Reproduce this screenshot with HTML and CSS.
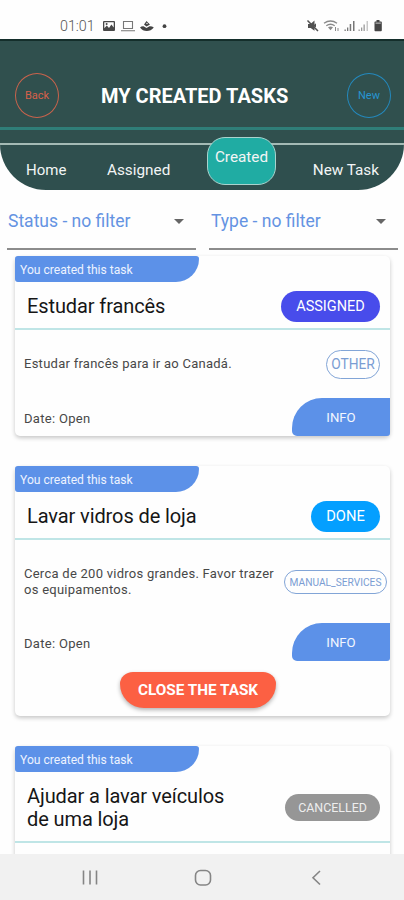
FILE: index.html
```
<!DOCTYPE html>
<html lang="pt">
<head>
<meta charset="utf-8">
<title>My Created Tasks</title>
<link rel="stylesheet" href="styles.css">
</head>
<body>
<div class="screen">
  <div class="status">
    <span class="clock">01:01</span>
    <svg class="status-left" width="66" height="14" viewBox="0 0 66 14">
      <path fill="#484848" fill-rule="evenodd" d="M2 2h10q1 0 1 1v8q0 1-1 1H2q-1 0-1-1V3q0-1 1-1zM2.300 3.300v6l2.500-2.800 2.200 2.500 2.400-3.500 2.300 3V3.300z"/>
      <circle cx="4.600" cy="5" r="1" fill="#484848"/>
      <path fill="none" stroke="#777" stroke-width="1.100" d="M21.500 2.500h9v7h-9zM19 11.700h14"/>
      <path fill="#444" d="M38 8.500q1.500-1.500 3.500-1.300L44.500 9l3-1.800q2.500-.200 4.300 1.300-2.800 3.500-7 3.500t-6.800-3.500zM42 5.500l2.500-3.500 3.500 3.500-3.500 2z"/>
      <circle cx="45" cy="4.500" r=".7" fill="#fff"/>
      <circle cx="62.500" cy="7.200" r="1.900" fill="#444"/>
    </svg>
    <svg class="status-right" width="78" height="14" viewBox="0 0 78 14">
      <path fill="#505050" d="M2 5h2.500l4-3.500v4.200l1.500-1.400v4L8.500 7.500v4.300L4.700 9H2z"/>
      <path stroke="#505050" stroke-width="1.500" d="M1.500 1.500l10.500 10.500"/>
      <g fill="none" stroke="#8a8a8a" stroke-width="1.400"><path d="M18 4.300q6.500-4.600 13 0M20.300 6.800q4.200-3 8.400 0"/></g>
      <path fill="#8a8a8a" d="M22 8.300q2.500-1.600 5 0l-2.500 3zM29 8h1v4h-1zM31.500 9h1v3h-1z"/>
      <path fill="#777" d="M38.500 10.500h1.300V12h-1.300zM41 8.500h1.300V12H41zM43.700 5h1.500v7h-1.500zM47 2h1.500v10H47z"/>
      <path fill="#999" d="M52.500 10.500h1.300V12h-1.300zM55 8.500h1.300V12H55zM57.500 5.500h1.300V12h-1.300z"/>
      <path fill="#c8c8c8" d="M60.500 2H62v10h-1.500z"/>
      <path fill="#454545" d="M70.500 1h3v1.500H75q.8 0 .8.800v8q0 .9-.8.900h-5.700q-.8 0-.8-.9v-8q0-.8.800-.8h1.200z"/>
      <path fill="#aaa" d="M69.500 3.500h5.300v1.300h-5.300z"/>
    </svg>
  </div>

  <header class="header">
    <button class="circle back">Back</button>
    <h1>MY CREATED TASKS</h1>
    <button class="circle new">New</button>
  </header>

  <div class="tabs-wrap">
    <nav class="tabs">
      <a class="tab home">Home</a>
      <a class="tab assigned">Assigned</a>
      <a class="tab created">Created</a>
      <a class="tab newtask">New Task</a>
    </nav>
  </div>

  <div class="filters">
    <div class="filter"><span>Status - no filter</span><i class="arrow"></i></div>
    <div class="filter type"><span>Type - no filter</span><i class="arrow"></i></div>
  </div>

  <main class="list">
    <article class="card">
      <div class="ribbon">You created this task</div>
      <div class="head"><h2>Estudar francês</h2><span class="pill assigned-pill">ASSIGNED</span></div>
      <div class="body"><p>Estudar francês para ir ao Canadá.</p><span class="kind">OTHER</span></div>
      <div class="foot"><span>Date: Open</span><button class="info">INFO</button></div>
    </article>
    <article class="card">
      <div class="ribbon">You created this task</div>
      <div class="head"><h2>Lavar vidros de loja</h2><span class="pill done-pill">DONE</span></div>
      <div class="body two-lines"><p>Cerca de 200 vidros grandes. Favor trazer<br>os equipamentos.</p><span class="kind small">MANUAL_SERVICES</span></div>
      <div class="foot"><span>Date: Open</span><button class="info">INFO</button></div>
      <div class="action"><button class="close">CLOSE THE TASK</button></div>
    </article>
    <article class="card">
      <div class="ribbon">You created this task</div>
      <div class="head tall"><h2>Ajudar a lavar veículos<br>de uma loja</h2><span class="pill cancelled-pill">CANCELLED</span></div>
      <div class="body"></div>
    </article>
  </main>

  <footer class="sysnav">
    <svg width="404" height="46" viewBox="0 0 404 46">
      <g fill="none" stroke="#858585" stroke-width="1.600">
        <path d="M83.500 16.500v14M90 16.500v14M96.500 16.500v14"/>
        <rect x="195.500" y="16.500" width="15" height="14.500" rx="5"/>
        <path d="M320 17l-7 6.700 7 6.800"/>
      </g>
    </svg>
  </footer>
</div>
</body>
</html>
```
FILE: styles.css
```
* { box-sizing: border-box; }

body {
  margin: 0;
  background: #fefefe;
  font-family: Roboto, "Noto Sans", sans-serif;
}

button {
  font-family: inherit;
  padding: 0;
  border: 0;
}

.screen {
  width: 404px;
  height: 900px;
  display: flex;
  flex-direction: column;
  overflow: hidden;
}

.status {
  flex: none;
  height: 39px;
  padding: 12px 20px 0 60px;
  display: flex;
  align-items: center;
}

.clock {
  font-size: 14.300px;
  font-weight: 300;
  color: #555;
  width: 42px;
}

.status-right { margin-left: auto; }

.header {
  flex: none;
  height: 91px;
  padding: 23px 13px 0 15px;
  display: flex;
  align-items: center;
  background: #30504e;
  border-top: 2px solid #142e2b;
  border-bottom: 3px solid #2f7e78;
}

.header h1 {
  margin: 0 0 0 42px;
  font-size: 20px;
  font-weight: 700;
  color: #fff;
}

.circle {
  width: 44px;
  height: 45px;
  border-radius: 50%;
  background: none;
  font-size: 11px;
}

.back { border: 1.500px solid #c9634c; color: #d9604a; }
.new { margin-left: auto; border: 1.500px solid #2489bd; color: #2795d2; }

.tabs-wrap {
  flex: none;
  height: 60px;
  background: linear-gradient(#30504e 15px, #fefefe 15px);
}

.tabs {
  height: 60px;
  padding: 13px 25px 0 26px;
  display: flex;
  align-items: flex-start;
  background: linear-gradient(#30504e 13px, #a4bab5 13px, #a4bab5 15px, #2f4f4e 15px);
  border-radius: 0 0 46px 46px;
}

.tab {
  margin-top: 18px;
  font-size: 15.300px;
  line-height: 18px;
  color: #f2f5f5;
  white-space: nowrap;
}

.home { width: 81px; font-size: 15px; }
.assigned { width: 100px; }
.newtask { margin-left: auto; }

.created {
  width: 69px;
  height: 48px;
  margin: -6px 0 0;
  padding-top: 10px;
  text-align: center;
  background: #20aca3;
  border: 1.500px solid #a9d3cd;
  border-radius: 18px;
}

.filters {
  flex: none;
  height: 60px;
  padding: 0 5px 0 7px;
  display: flex;
  gap: 13px;
}

.filter {
  width: 189px;
  height: 60px;
  padding: 4px 12px 0 1px;
  display: flex;
  justify-content: space-between;
  align-items: center;
  border-bottom: 2px solid #8c8c8c;
  font-size: 17.500px;
  color: #6493e2;
}

.type { padding-left: 2px; }

.arrow {
  border: 5px solid transparent;
  border-top-color: #666;
  border-bottom: 0;
}

.list {
  flex: 1;
  min-height: 0;
  padding: 6px 14px 0 15px;
  display: flex;
  flex-direction: column;
  gap: 30px;
  overflow: hidden;
}

.card {
  flex: none;
  background: #fefefe;
  border-radius: 5px;
  box-shadow: 0 2px 4px rgba(0, 0, 0, .22);
}

.ribbon {
  width: 184px;
  height: 26px;
  padding: 1px 0 0 5px;
  border-radius: 3px 3px 24px 3px;
  background: #5c91e8;
  color: #edf3ff;
  font-size: 12.100px;
  line-height: 27px;
}

.head {
  height: 48px;
  padding: 0 10px 0 12px;
  display: flex;
  justify-content: space-between;
  align-items: center;
  border-bottom: 2px solid #bfe5e6;
}

.head.tall { height: 71px; }

.head h2 {
  margin: 2px 0 0;
  font-size: 20px;
  font-weight: 400;
  line-height: 23px;
  letter-spacing: -.1px;
  color: #161616;
}

.pill {
  margin-top: 2px;
  height: 31px;
  border-radius: 16px;
  display: flex;
  align-items: center;
  justify-content: center;
  color: #fff;
}

.assigned-pill { width: 99px; background: #484ceb; font-size: 14.500px; }
.done-pill { width: 69px; background: #049fff; font-size: 14.700px; }
.cancelled-pill { width: 95px; height: 27px; background: #969696; color: #eee; font-size: 12.400px; }

.body {
  padding: 26px 10px 26px 9px;
  display: flex;
  justify-content: space-between;
  align-items: center;
}

.body.two-lines { padding-bottom: 25px; }

.body p {
  margin: 0;
  font-size: 13px;
  line-height: 16px;
  letter-spacing: .26px;
  color: #484848;
  white-space: nowrap;
}

.kind {
  width: 54px;
  height: 29px;
  margin: -7px 0;
  display: flex;
  align-items: center;
  justify-content: center;
  border: 1px solid #82a5d7;
  border-radius: 15px;
  font-size: 13.800px;
  color: #7a9dd3;
}

.kind.small {
  width: 103px;
  height: 24px;
  margin-right: -7px;
  border-radius: 12px;
  font-size: 10.200px;
}

.foot {
  height: 38px;
  padding-left: 9px;
  display: flex;
  justify-content: space-between;
  align-items: center;
  font-size: 13px;
  letter-spacing: .3px;
  color: #484848;
}

.foot span { padding-top: 3px; }

.info {
  width: 98px;
  height: 38px;
  border-radius: 30px 0 3px 5px;
  background: #5c91e8;
  color: #f3f7ff;
  font-size: 13.200px;
}

.action {
  height: 55px;
  padding: 11px 0 0 105px;
}

.close {
  width: 156px;
  height: 36px;
  border-radius: 13px 13px 24px 24px / 12px 12px 24px 24px;
  background: #fc6043;
  color: #fff;
  font-size: 15.300px;
  font-weight: 700;
  box-shadow: 0 2px 4px rgba(0, 0, 0, .3);
}

.sysnav {
  flex: none;
  height: 46px;
  background: #f1f1f1;
}

.sysnav svg { display: block; }
```
